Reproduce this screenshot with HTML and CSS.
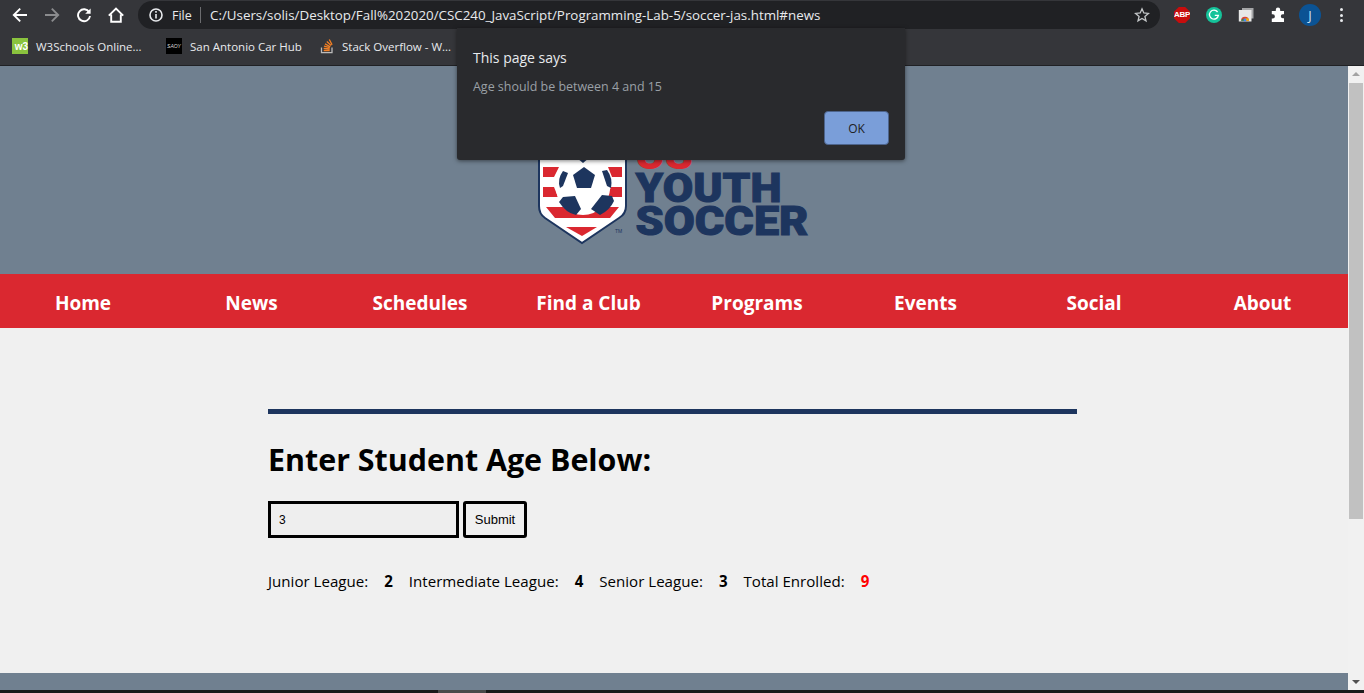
FILE: index.html
```html
<!DOCTYPE html>
<html lang="en">
<head>
<meta charset="utf-8">
<title>US Youth Soccer</title>
<link rel="stylesheet" href="styles.css">
</head>
<body>
<div class="toolbar">
  <div class="nav-icons">
    <svg class="tb-icon" viewBox="0 0 16 16"><path class="ln" d="M15 8H2M8.200 1.600 1.800 8l6.400 6.400"/></svg>
    <svg class="tb-icon dim" viewBox="0 0 16 16"><path class="ln" d="M1 8h13M7.800 1.600 14.200 8l-6.400 6.400"/></svg>
    <svg class="tb-icon" viewBox="0 0 16 16"><path class="ln" d="M13.200 5.200A6 6 0 1 0 14 9"/><path class="fl" d="M14.600 1.400v5.400H9.200z"/></svg>
    <svg class="tb-icon" viewBox="0 0 16 16"><path class="ln" d="M.8 8.600 8 1.600l7.200 7M3.200 7.400v7.300h9.600V7.400"/></svg>
  </div>
  <div class="omnibox">
    <svg class="info" viewBox="0 0 14 14"><circle cx="7" cy="7" r="6"/><path d="M7 6v4.400M7 3v1.800"/></svg>
    <span class="scheme">File</span>
    <span class="omni-sep"></span>
    <span class="url">C:/Users/solis/Desktop/Fall%202020/CSC240_JavaScript/Programming-Lab-5/soccer-jas.html#news</span>
    <svg class="star" viewBox="0 0 16 16"><path d="M8 1.800 9.800 6l4.600.4-3.500 3 1.100 4.500L8 11.500l-4 2.400 1.100-4.500-3.500-3L6.200 6z"/></svg>
  </div>
  <div class="ext-icons">
    <span class="abp">ABP</span>
    <svg class="ext" viewBox="0 0 16 16"><circle class="g-bg" cx="8" cy="8" r="8"/><path class="g-ln" d="M11.600 5a4.500 4.500 0 1 0 .8 3.400H8.800"/></svg>
    <svg class="ext" viewBox="0 0 16 16"><path class="cast-b" d="M4 1h11.500v10.500H4z"/><path class="cast-f" d="M.8 3h12.700v11.500H.8z"/><path class="c-r" d="M3 13.800a4 4 0 0 1 8 0z"/><path class="c-g" d="M3 13.800h3.500L5 11.500z"/><path class="c-y" d="M7 11.500v2.300h4a4 4 0 0 0-1-2.500z"/><circle class="c-b" cx="7" cy="13" r="1.400"/></svg>
    <svg class="ext" viewBox="0 0 16 16"><path class="fl" d="M5.800 2.800a2.200 2.200 0 0 1 4.400 0V4H14v3.300h-1.200a2 2 0 0 0 0 4H14V15H1.800v-3.500h1a2.100 2.100 0 0 0 0-4.200h-1V4h4z"/></svg>
    <span class="avatar">J</span>
    <span class="kebab"><i></i><i></i><i></i></span>
  </div>
</div>

<div class="bookmarks">
  <div class="bm bm-w3"><span class="fav-w3">w3</span><span>W3Schools Online...</span></div>
  <div class="bm bm-car"><span class="fav-car">SAOY</span><span>San Antonio Car Hub</span></div>
  <div class="bm bm-so">
    <svg class="fav-so" viewBox="0 0 16 16"><path class="so-g" d="M2.500 9.500v5.200h10.500V9.500"/><path class="so-o" d="M4.700 12.500h6M4.700 10.400l6 .6M5 8.200l5.800 1.500M6 5.900l5.300 2.800M7.800 3.600l4.400 4M10.300 1.500l2.800 5.200"/></svg>
    <span>Stack Overflow - W...</span>
  </div>
</div>

<div class="viewport">
  <div class="page">
    <header class="site-header">
      <svg class="logo" viewBox="0 0 270 140">
        <path class="sh-out" d="M2 11h87v92q0 8-7 12l-37 25-37-25q-6-4-6-12z"/>
        <path class="sh-red" d="M6 64h16l-5 10H6zM71 64h14v10H75zM6 84h11l4 10H6zM74 84h11v10H70z"/>
        <path class="sh-red" d="M9 104h17q20 10 39 0h17l-9 11H18z"/>
        <path class="sh-red" d="M29 124h31l-15 9z"/>
        <circle class="ball" cx="46" cy="85" r="27"/>
        <path class="patch" d="M47 64l11 8-4 13H40l-4-13z"/>
        <path class="patch" d="M26 94l12-1 6 13-5 6q-10-2-17-13z"/>
        <path class="patch" d="M65 92l10 1 2 5q-4 9-14 14l-9-6z"/>
        <path class="patch" d="M26 68l5 2-5 13-3 2q-3-9 3-17z"/>
        <path class="patch" d="M65 68l5-1q6 8 4 18l-4-2z"/>
        <path class="patch" d="M40 55h12l-6 5z"/>
        <text class="tm" x="78" y="130">TM</text>
        <text class="logo-red" x="98" y="66" textLength="58" lengthAdjust="spacingAndGlyphs">US</text>
        <text class="logo-navy" x="98.500" y="99" textLength="146" lengthAdjust="spacingAndGlyphs">YOUTH</text>
        <text class="logo-navy" x="98.500" y="132" textLength="173" lengthAdjust="spacingAndGlyphs">SOCCER</text>
      </svg>
    </header>
    <nav class="site-nav">
      <a>Home</a><a>News</a><a>Schedules</a><a>Find a Club</a><a>Programs</a><a>Events</a><a>Social</a><a>About</a>
    </nav>
    <main class="content">
      <div class="inner">
        <hr class="rule">
        <h1>Enter Student Age Below:</h1>
        <form class="age-form">
          <input class="age-input" type="text" value="3">
          <button class="submit" type="button">Submit</button>
        </form>
        <div class="stats">
          <div class="stat"><span>Junior League:</span><b>2</b></div>
          <div class="stat"><span>Intermediate League:</span><b>4</b></div>
          <div class="stat"><span>Senior League:</span><b>3</b></div>
          <div class="stat"><span>Total Enrolled:</span><b class="total">9</b></div>
        </div>
      </div>
    </main>
    <footer class="site-footer"></footer>
  </div>
  <div class="scrollbar">
    <span class="arrow up"></span>
    <span class="thumb"></span>
    <span class="arrow down"></span>
  </div>
</div>
<div class="taskbar"><span class="task-active"></span></div>

<div class="dialog">
  <div class="dlg-title">This page says</div>
  <div class="dlg-msg">Age should be between 4 and 15</div>
  <div class="dlg-actions"><button class="dlg-ok" type="button">OK</button></div>
</div>
</body>
</html>
```
FILE: styles.css
```css
* { box-sizing: border-box; }
html, body { margin: 0; height: 693px; overflow: hidden; }
body {
  display: flex;
  flex-direction: column;
  width: 1364px;
  font-family: "Open Sans", "Noto Sans", sans-serif;
  background: #35363a;
  position: relative;
}

/* browser chrome */
.toolbar { height: 30px; display: flex; align-items: center; background: #35363a; flex: none; }
.nav-icons { display: flex; gap: 16px; padding-left: 12px; width: 138px; flex: none; }
.tb-icon { width: 16px; height: 16px; }
.ln { fill: none; stroke: #fff; stroke-width: 1.9; }
.fl { fill: #fff; }
.dim .ln { stroke: #8b8c8e; }
.omnibox {
  width: 1022px; height: 28px; background: #202124; border-radius: 14px;
  display: flex; align-items: center; padding-left: 11px; color: #e8eaed; flex: none;
}
.info { width: 14px; height: 14px; fill: none; stroke: #e8eaed; stroke-width: 1.6; flex: none; }
.scheme { font-size: 12.500px; margin-left: 9px; width: 22px; }
.omni-sep { width: 1px; height: 16px; background: #6b6c6f; margin: 0 9px 0 6px; }
.url { font-size: 13.350px; flex: 1; white-space: nowrap; }
.star { width: 16px; height: 16px; fill: none; stroke: #c4c7c9; stroke-width: 1.3; margin-right: 10px; flex: none; }
.ext-icons { display: flex; align-items: center; flex: 1; height: 30px; padding-left: 14px; gap: 16px; }
.abp {
  width: 16px; height: 16px; background: #c70d0d; color: #fff; flex: none;
  clip-path: polygon(30% 0, 70% 0, 100% 30%, 100% 70%, 70% 100%, 30% 100%, 0 70%, 0 30%);
  font: bold 8px/16px "Liberation Sans", sans-serif; text-align: center; letter-spacing: -0.3px;
}
.ext { width: 16px; height: 16px; flex: none; }
.g-bg { fill: #15c39a; }
.g-ln { fill: none; stroke: #fff; stroke-width: 1.300; }
.cast-b { fill: #a5a6a8; }
.cast-f { fill: #e8e8e8; }
.c-r { fill: #db4437; }
.c-g { fill: #0f9d58; }
.c-y { fill: #f4b400; }
.c-b { fill: #4285f4; }
.avatar {
  width: 22px; height: 22px; border-radius: 50%; background: #0b5394; color: #cfe2f3; margin-left: -3px; flex: none;
  font-size: 13px; line-height: 22px; text-align: center;
}
.kebab { display: flex; flex-direction: column; gap: 2.500px; margin-left: 3px; width: 3px; flex: none; }
.kebab i { width: 3px; height: 3px; background: #e8eaed; border-radius: 50%; }

.bookmarks {
  height: 36px; flex: none; display: flex; align-items: center; background: #35363a;
  border-bottom: 1px solid #202124; color: #e8eaed; font-size: 11.500px; padding-left: 12px; padding-bottom: 3px;
}
.bm { display: flex; align-items: center; gap: 8px; white-space: nowrap; flex: none; }
.bm-w3 { width: 154px; }
.bm-car { width: 153px; }
.bm-so { gap: 8px; }
.fav-w3 {
  width: 16px; height: 16px; background: #8ac33e; color: #fff; font: bold 10px/18px "Liberation Sans", sans-serif; text-align: right; flex: none;
}
.fav-car {
  width: 16px; height: 16px; background: #000; color: #ddd; font: italic 5px/16px "Liberation Sans", sans-serif; text-align: center; overflow: hidden; flex: none;
}
.fav-so { width: 16px; height: 16px; flex: none; margin-right: -1px; }
.so-g { fill: none; stroke: #bcbbbb; stroke-width: 1.300; }
.so-o { fill: none; stroke: #f48024; stroke-width: 1.300; }

/* page */
.viewport { flex: 1; display: flex; min-height: 0; }
.page { flex: 1; display: flex; flex-direction: column; min-width: 0; background: #f0f0f0; }
.site-header { height: 208px; background: #708090; flex: none; padding: 37px 0 0 537px; }
.logo { display: block; width: 270px; height: 140px; overflow: visible; }
.sh-out { fill: #fff; stroke: #1d355e; stroke-width: 2; }
.sh-red { fill: #da2830; }
.ball { fill: #fff; }
.patch { fill: #1d355e; }
.tm { font: 5px "Liberation Sans", sans-serif; fill: #1d355e; }
.logo-red { font: 900 40px Roboto, sans-serif; fill: #da2830; }
.logo-navy { font: 900 40px Roboto, sans-serif; fill: #1d355e; stroke: #1d355e; stroke-width: 1; }

.site-nav { height: 54px; flex: none; display: grid; grid-template-columns: repeat(8, 1fr); background: #da2830; }
.site-nav a {
  padding-right: 2.500px; color: #fff; font-size: 19px; font-weight: 700; line-height: 58px; text-align: center; white-space: nowrap;
}
.content { flex: 1; padding: 81px 3px 0 0; }
.inner { width: 809px; margin: 0 auto; }
.rule { height: 5px; border: 0; margin: 0; background: #1d355e; }
h1 { margin: 24px 0 0; font-size: 30.400px; line-height: 43px; font-weight: 700; color: #000; }
.age-form { display: flex; gap: 4px; margin-top: 20px; }
.age-input {
  width: 191px; height: 37px; border: 3.500px solid #000; background: #eee; padding: 0 8px; font: 12px "Liberation Sans", sans-serif; color: #000; border-radius: 0;
}
.submit {
  width: 64px; height: 37px; border: 3px solid #000; border-radius: 3px; background: #f0f0f0; font: 13px "Liberation Sans", sans-serif; color: #000; padding: 0;
}
.stats { display: flex; gap: 16px; margin-top: 32px; font-size: 15.100px; line-height: 22px; color: #000; }
.stat { display: flex; gap: 16px; }
.stat b { font-weight: 700; }
.total { color: #f00; }
.site-footer { height: 17px; flex: none; background: #708090; }

.scrollbar { width: 16px; flex: none; background: #f1f1f1; display: flex; flex-direction: column; align-items: center; }
.arrow { flex: none; width: 0; height: 0; border-left: 4px solid transparent; border-right: 4px solid transparent; }
.arrow.up { border-bottom: 4px solid #a3a3a3; margin: 6px 0 7px; }
.arrow.down { border-top: 4px solid #505050; margin: auto 0 6px; }
.thumb { width: 14px; height: 436px; background: #c1c1c1; flex: none; }

.taskbar { height: 3px; flex: none; background: #1a1a1a; padding-left: 438px; }
.task-active { display: block; width: 48px; height: 3px; background: #4a4a4a; }

/* alert */
.dialog {
  position: absolute; left: 457px; top: 28px; width: 448px; height: 132px; background: #292a2d; border-radius: 0 0 3px 3px;
  box-shadow: 0 1px 4px rgba(0,0,0,.5); padding: 20px 16px 0;
}
.dlg-title { font-size: 14px; line-height: 20px; color: #e8eaed; }
.dlg-msg { font-size: 12.460px; line-height: 18px; color: #9aa0a6; margin-top: 10px; }
.dlg-actions { display: flex; justify-content: flex-end; margin-top: 15px; }
.dlg-ok {
  width: 65px; height: 34px; background: #7a9ed9; border: 1px solid #4d648c; border-radius: 4px; color: #202124; font: 12px "Open Sans", sans-serif; padding: 0;
}
```
